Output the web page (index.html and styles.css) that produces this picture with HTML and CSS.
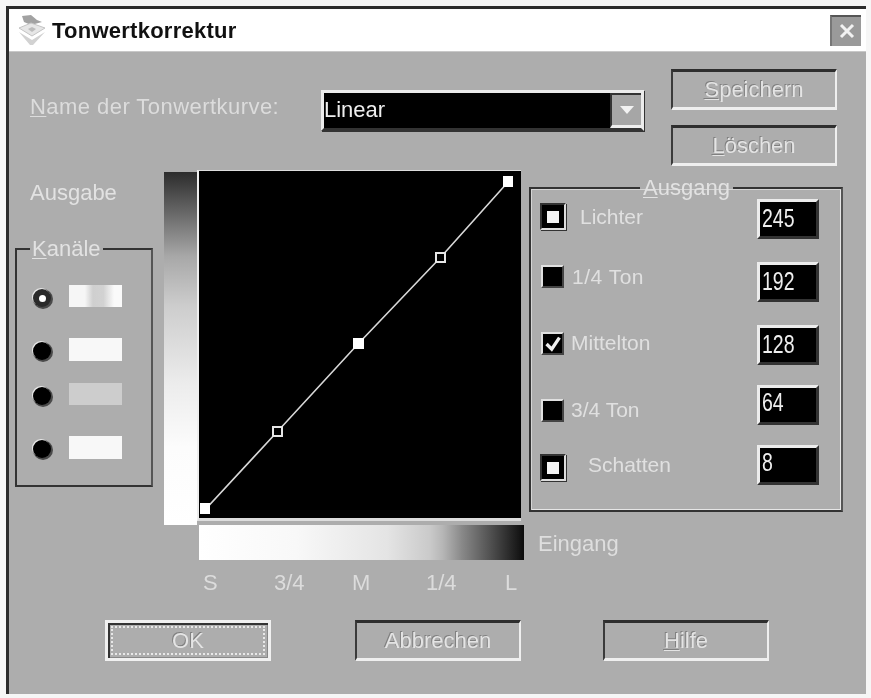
FILE: index.html
```html
<!DOCTYPE html>
<html lang="de">
<head>
<meta charset="utf-8">
<title>Tonwertkorrektur</title>
<link rel="stylesheet" href="styles.css">
</head>
<body>
<div class="window">
  <header class="titlebar">
    <svg class="app-icon" viewBox="0 0 30 32" width="30" height="32" aria-hidden="true">
      <path d="M5 2 L14 1 L20 6 L25 8 L14 11 L7 8 Z" fill="#a2a2a2"/>
      <path d="M2 14 L14 9 L28 14 L15 22 Z" fill="#e6e6e6" stroke="#c4c4c4" stroke-width="1"/>
      <path d="M11 15 L15 13 L19 15 L15 18 Z" fill="#bcbcbc"/>
      <path d="M2 18 L15 26 L28 18 L16 31 L13 31 Z" fill="#d2d2d2"/>
    </svg>
    <span class="title">Tonwertkorrektur</span>
    <span class="close"><svg viewBox="0 0 16 16" width="16" height="16" aria-hidden="true"><path d="M2 2 L14 14 M14 2 L2 14" stroke="#f2f2f2" stroke-width="3"/></svg></span>
  </header>
  <main class="body">
    <section class="top">
      <label class="curve-label"><u>N</u>ame der Tonwertkurve:</label>
      <div class="combo">
        <span class="combo-value">Linear</span>
        <span class="combo-arrow"><i class="tri"></i></span>
      </div>
      <div class="top-buttons">
        <button class="btn btn-side"><u>S</u>peichern</button>
        <button class="btn btn-side"><u>L</u>öschen</button>
      </div>
    </section>
    <section class="main">
      <div class="left">
        <div class="ausgabe">Ausgabe</div>
        <fieldset class="group kanaele">
          <legend><u>K</u>anäle</legend>
          <div class="channels">
            <div class="channel"><span class="radio on"></span><span class="swatch sw-rgb"></span></div>
            <div class="channel"><span class="radio"></span><span class="swatch sw-white"></span></div>
            <div class="channel"><span class="radio"></span><span class="swatch sw-gray"></span></div>
            <div class="channel"><span class="radio"></span><span class="swatch sw-white"></span></div>
          </div>
        </fieldset>
      </div>
      <div class="vgrad"></div>
      <div class="plot">
        <svg viewBox="0 0 322 348" width="322" height="348" aria-hidden="true">
          <path d="M3 342 L78 261 L159 173 L241 87 L309 11" fill="none" stroke="#d8d8d8" stroke-width="1.6"/>
          <rect x="1" y="332" width="10" height="11" fill="#fff"/>
          <rect x="74" y="256" width="9" height="9" fill="#000" stroke="#e6e6e6" stroke-width="2"/>
          <rect x="154" y="167" width="11" height="11" fill="#fff"/>
          <rect x="237" y="82" width="9" height="9" fill="#000" stroke="#e6e6e6" stroke-width="2"/>
          <rect x="304" y="5" width="10" height="11" fill="#fff"/>
        </svg>
      </div>
      <div class="right">
        <fieldset class="group ausgang">
          <legend><u>A</u>usgang</legend>
          <div class="tones">
            <div class="tone"><span class="check big"><i></i></span><span class="tone-label l-lichter">Lichter</span><span class="num"><b>245</b></span></div>
            <div class="tone"><span class="check"></span><span class="tone-label l-quarter">1/4 Ton</span><span class="num"><b>192</b></span></div>
            <div class="tone"><span class="check"><svg viewBox="0 0 14 14" width="18" height="18" aria-hidden="true"><path d="M2 7 L6 11 L12 2" fill="none" stroke="#eee" stroke-width="2.6"/></svg></span><span class="tone-label l-mid">Mittelton</span><span class="num"><b>128</b></span></div>
            <div class="tone"><span class="check"></span><span class="tone-label l-mid">3/4 Ton</span><span class="num num-high"><b>64</b></span></div>
            <div class="tone"><span class="check big"><i></i></span><span class="tone-label l-schatten">Schatten</span><span class="num num-high"><b>8</b></span></div>
          </div>
        </fieldset>
      </div>
      <div class="hgrad"></div>
      <div class="eingang">Eingang</div>
    </section>
    <section class="ticks">
      <span>S</span><span>3/4</span><span>M</span><span>1/4</span><span>L</span>
    </section>
    <section class="actions">
      <button class="btn btn-action btn-default"><span class="focus">OK</span></button>
      <button class="btn btn-action">Abbrechen</button>
      <button class="btn btn-action"><u>H</u>ilfe</button>
    </section>
  </main>
</div>
</body>
</html>
```
FILE: styles.css
```css
* { box-sizing: border-box; }
html, body { margin: 0; padding: 0; background: #f6f6f6; }
body { width: 871px; height: 698px; overflow: hidden; font-family: "Liberation Sans", Arial, sans-serif; }
u { text-decoration-thickness: 1px; text-underline-offset: 2px; }

.window {
  width: 860px; height: 688px; margin: 6px 0 0 6px;
  border-top: 3px solid #2c2c2c; border-left: 3px solid #2c2c2c;
  background: #adadad; color: #e6e6e6; font-size: 21px;
  filter: blur(0.65px);
}

.titlebar {
  height: 43px; background: #fff; display: flex; align-items: center;
  padding: 0 5px 0 8px; border-bottom: 1px solid #c8c8c8;
}
.app-icon { flex: none; margin-right: 5px; }
.title { font-weight: 700; font-size: 22px; letter-spacing: 0.25px; color: #111; flex: 1; position: relative; top: 1px; }
.close {
  width: 31px; height: 31px; background: #9a9a9a; border-top: 2px solid #555; border-left: 2px solid #777;
  display: flex; align-items: center; justify-content: center;
}

.top { height: 118px; display: flex; align-items: flex-start; padding: 17px 0 0 21px; }
.curve-label { width: 291px; margin-top: 25px; font-size: 22px; letter-spacing: 0.45px; white-space: nowrap; color: #dcdcdc; }
.combo {
  width: 323px; height: 41px; margin-top: 21px; display: flex; background: #000;
  border: 3px solid #ececec; border-bottom: 3px solid #333;
  box-shadow: 1px 1px 0 #333;
}
.combo-value { flex: 1; color: #eee; font-size: 22px; line-height: 34px; }
.combo-arrow {
  width: 31px; background: #a6a6a6; border-top: 2px solid #333; border-left: 2px solid #333; border-bottom: 3px solid #eee;
  display: flex; align-items: center; justify-content: center;
}
.tri { width: 0; height: 0; border-left: 7px solid transparent; border-right: 7px solid transparent; border-top: 8px solid #f2f2f2; }
.top-buttons { margin-left: 27px; display: flex; flex-direction: column; gap: 15px; }

.btn {
  font: inherit; color: #e4e4e4; background: #adadad; padding: 0; display: block;
  border-style: solid; border-width: 3px 2px; border-color: #2e2e2e #efefef #efefef #3a3a3a;
  text-shadow: -1px -1px 0 #808080;
}
.btn-side { width: 166px; height: 41px; font-size: 22px; line-height: 30px; }

.main {
  display: grid; padding-left: 6px;
  grid-template-columns: 149px 33px 332px 314px;
  grid-template-rows: 355px 35px;
}
.left { grid-column: 1; grid-row: 1; }
.ausgabe { height: 67px; padding: 10px 0 0 15px; font-size: 22px; line-height: 26px; color: #e2e2e2; }

.group { margin: 0; padding: 0; min-width: 0; border: 2px solid #333; border-right-color: #555; }
.group legend { font-size: 22px; line-height: 24px; padding: 0 3px; color: #e2e2e2; }
.kanaele { width: 138px; height: 250px; }
.kanaele legend { margin-left: 13px; padding: 0 2px; }
.channels { margin-top: 23px; }
.channel { display: flex; align-items: center; height: 24px; padding-left: 16px; margin-bottom: 29px; }
.channel:nth-child(even) { margin-bottom: 21px; }
.radio {
  width: 18px; height: 18px; border-radius: 50%; background: #000; flex: none; margin: 4px 18px 0 0;
  box-shadow: -1px -1px 0 0 #e8e8e8, 1px 1px 0 1px #4a4a4a;
  display: flex; align-items: center; justify-content: center;
}
.radio.on { background: #2a2a2a; }
.radio.on::after { content: ""; width: 7px; height: 7px; border-radius: 50%; background: #fff; }
.swatch { width: 53px; height: 22px; display: block; }
.sw-rgb { background: linear-gradient(90deg, #f6f6f6 0 30%, #cfcfcf 45%, #d2d2d2 65%, #fafafa 85%); }
.sw-white { background: #f8f8f8; height: 23px; }
.sw-gray { background: #cdcdcd; }

.vgrad {
  grid-column: 2; grid-row: 1; height: 353px; align-self: end;
  background: linear-gradient(180deg, #2c2c2c 0, #6a6a6a 12%, #a8a8a8 24%, #cdcdcd 38%, #ececec 60%, #fcfcfc 78%, #fff 100%);
}
.plot {
  grid-column: 3; grid-row: 1; width: 324px; height: 351px; background: #000;
  border-left: 2px solid #eee; border-bottom: 3px solid #ddd; border-top: 1px solid #ddd;
  overflow: hidden;
}
.plot svg { display: block; }
.hgrad {
  grid-column: 3; grid-row: 2; width: 325px; height: 35px; margin-left: 2px;
  background: linear-gradient(90deg, #fff 0, #f8f8f8 30%, #e4e4e4 58%, #cacaca 71%, #b6b6b6 75%, #888 81%, #555 89%, #0c0c0c 100%);
}
.eingang { grid-column: 4; grid-row: 2; padding: 6px 0 0 9px; font-size: 22px; line-height: 26px; color: #dedede; }

.right { grid-column: 4; grid-row: 1; padding: 6px 0 0 0; }
.ausgang { width: 314px; height: 336px; box-shadow: inset 1px 1px 0 #d4d4d4, inset -1px -1px 0 #e6e6e6; }
.ausgang legend { margin-left: 109px; line-height: 24px; padding: 0 3px; }
.tones { margin-top: -1px; display: grid; grid-template-rows: 63px 63px 60px 60px 42px; }
.tone { display: flex; align-items: flex-start; position: relative; padding-left: 9px; }
.check {
  width: 23px; height: 23px; background: #000; flex: none; margin-left: 1px;
  border: 2px solid; border-color: #e0e0e0 #444 #444 #e0e0e0;
  display: flex; align-items: center; justify-content: center;
}
.check.big { width: 26px; height: 27px; margin-left: 0; border-color: #333 #ddd #ddd #333; border-width: 2px; box-shadow: 1px 1px 0 #333; }
.check.big i { width: 12px; height: 12px; background: #f4f4f4; }
.tone:nth-child(1) .check { margin-top: 4px; }
.tone:nth-child(2) .check { margin-top: 3px; }
.tone:nth-child(3) .check { margin-top: 7px; }
.tone:nth-child(4) .check { margin-top: 14px; }
.tone:nth-child(5) .check { margin-top: 9px; }
.tone-label { font-size: 21px; line-height: 28px; flex: none; color: #e0e0e0; white-space: nowrap; }
.tone:nth-child(1) .tone-label { margin-top: 4px; }
.tone:nth-child(2) .tone-label { margin-top: 1px; }
.tone:nth-child(3) .tone-label { margin-top: 4px; }
.tone:nth-child(4) .tone-label { margin-top: 11px; }
.tone:nth-child(5) .tone-label { margin-top: 6px; }
.l-lichter { width: 168px; padding-left: 14px; }
.l-quarter { width: 185px; padding-left: 8px; letter-spacing: 0.5px; }
.l-mid { width: 185px; padding-left: 7px; }
.l-schatten { width: 168px; padding-left: 22px; }
.num {
  width: 62px; height: 40px; background: #000; position: absolute; left: 226px; top: 0;
  border: 3px solid; border-color: #ececec #333 #333 #ececec;
  color: #eee; line-height: 32px; padding-left: 2px; overflow: hidden;
}
.num-high { line-height: 28px; }
.num b { display: inline-block; font-weight: 400; font-size: 25px; transform: scaleX(0.78); transform-origin: left center; }

.ticks {
  display: grid; grid-template-columns: 71px 78px 74px 79px 20px;
  padding: 10px 0 0 194px; font-size: 22px; line-height: 26px; height: 60px; color: #dcdcdc;
}

.actions { display: flex; padding-left: 96px; }
.btn-action { width: 166px; height: 41px; font-size: 22px; margin-right: 82px; line-height: 30px; }
.btn-default { width: 166px; margin-right: 84px; border-color: #f0f0f0; border-width: 3px; box-shadow: inset 2px 2px 0 #333, inset -1px -1px 0 #888; padding: 3px; }
.focus { display: block; height: 100%; border: 2px dotted #e8e8e8; line-height: 26px; }
```
